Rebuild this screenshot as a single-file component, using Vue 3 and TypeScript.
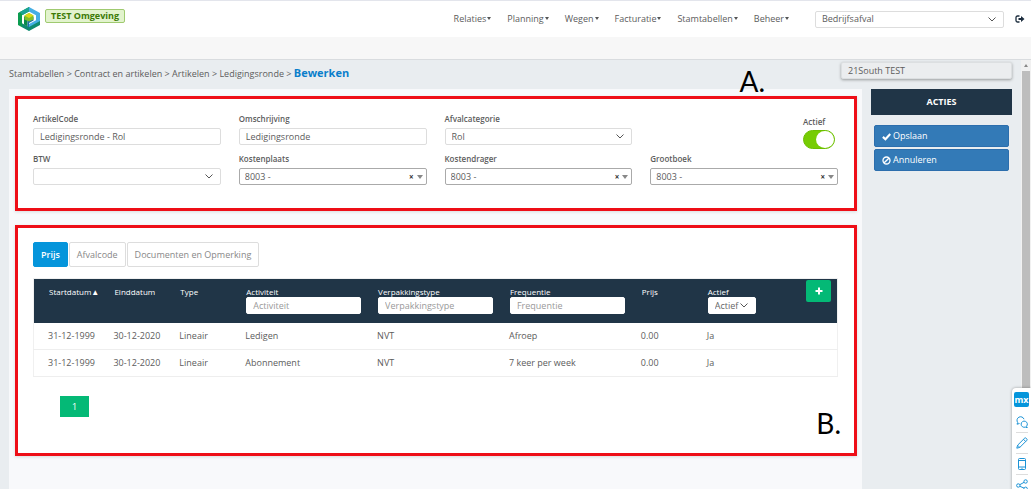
<script setup lang="ts">
import { ref } from 'vue'

interface PriceRow {
  start: string
  end: string
  type: string
  activity: string
  packaging: string
  frequency: string
  price: string
  active: string
}

const menu = ['Relaties', 'Planning', 'Wegen', 'Facturatie', 'Stamtabellen', 'Beheer']
const crumbs = ['Stamtabellen', 'Contract en artikelen', 'Artikelen', 'Ledigingsronde']
const tabs = ['Prijs', 'Afvalcode', 'Documenten en Opmerking']
const accounts = [
  { id: 'kostenplaats', label: 'Kostenplaats' },
  { id: 'kostendrager', label: 'Kostendrager' },
  { id: 'grootboek', label: 'Grootboek' },
]
const filters = [
  { id: 'f-activiteit', label: 'Activiteit' },
  { id: 'f-verpakking', label: 'Verpakkingstype' },
  { id: 'f-frequentie', label: 'Frequentie' },
]
const rows: PriceRow[] = [
  { start: '31-12-1999', end: '30-12-2020', type: 'Lineair', activity: 'Ledigen', packaging: 'NVT', frequency: 'Afroep', price: '0.00', active: 'Ja' },
  { start: '31-12-1999', end: '30-12-2020', type: 'Lineair', activity: 'Abonnement', packaging: 'NVT', frequency: '7 keer per week', price: '0.00', active: 'Ja' },
]

const activeTab = ref('Prijs')
const code = ref('Ledigingsronde - Rol')
const description = ref('Ledigingsronde')
const enabled = ref(true)
</script>

<template>
  <div class="app">
    <header class="topbar">
      <svg class="logo" viewBox="0 0 24 24" aria-hidden="true">
        <path d="M12 0 1 6v12l4 2.200V8.200L12 4.500z" fill="#0c9c50" />
        <path d="M12 0 3 5l2.500 3L12 4.500l3-1.600z" fill="#1aa394" />
        <path d="M12 0v4.500l7 3.700v5L12 17v4l11-6V6z" fill="#45aee4" />
        <path d="M12 24 5 20.200v-4l7 3.800 11-6v4z" fill="#0e8a70" />
        <path d="M7 9v8.500l3.500 2V13z" fill="#0a8a48" />
        <path d="M10.500 13l6-3v3.500L12 16v4.500l-1.500-.9z" fill="#1b6fa6" />
        <path d="M12 6 7.500 8.500v4L12 14.500l4.500-2v-4z" fill="#7fbf2a" />
        <path d="M12 6 7.500 8.500 12 11l4.500-2.500z" fill="#d9d916" />
      </svg>
      <span class="env">TEST Omgeving</span>
      <nav class="menu">
        <button v-for="item in menu" :key="item" type="button">{{ item }}<i class="caret"></i></button>
      </nav>
      <div class="picker company">
        <select aria-label="Afdeling"><option>Bedrijfsafval</option></select>
        <svg class="chevron" viewBox="0 0 8 5" aria-hidden="true"><path d="M.5.5 4 4 7.500.5" /></svg>
      </div>
      <button class="logout" type="button" aria-label="Uitloggen">
        <svg viewBox="0 0 20 16" aria-hidden="true">
          <path d="M9 2H5a3 3 0 0 0-3 3v6a3 3 0 0 0 3 3h4" fill="none" stroke="#1b2c3d" stroke-width="2.600" />
          <path d="M7 5.800h5V2l7 6-7 6v-3.800H7z" fill="#1b2c3d" />
        </svg>
      </button>
    </header>
    <div class="subbar"></div>

    <div class="body">
      <div class="content">
        <div class="crumb-row">
          <nav class="crumbs">
            <template v-for="c in crumbs" :key="c"><a href="#">{{ c }}</a> &gt; </template><strong>Bewerken</strong>
          </nav>
          <div class="notice">21South TEST</div>
        </div>

        <div class="columns">
          <main class="panel">
            <section class="card details">
              <span class="mark mark-a">A.</span>
              <div class="field">
                <label for="code">ArtikelCode</label>
                <input id="code" v-model="code" type="text" />
              </div>
              <div class="field">
                <label for="description">Omschrijving</label>
                <input id="description" v-model="description" type="text" />
              </div>
              <div class="field">
                <label for="category">Afvalcategorie</label>
                <div class="picker">
                  <select id="category"><option>Rol</option></select>
                  <svg class="chevron" viewBox="0 0 8 5" aria-hidden="true"><path d="M.5.5 4 4 7.500.5" /></svg>
                </div>
              </div>
              <label class="toggle">
                <span>Actief</span>
                <input v-model="enabled" type="checkbox" />
              </label>
              <div class="field">
                <label for="btw">BTW</label>
                <div class="picker">
                  <select id="btw"><option></option></select>
                  <svg class="chevron" viewBox="0 0 8 5" aria-hidden="true"><path d="M.5.5 4 4 7.500.5" /></svg>
                </div>
              </div>
              <div v-for="a in accounts" :key="a.id" class="field">
                <label :for="a.id">{{ a.label }}</label>
                <div class="picker account">
                  <select :id="a.id"><option>8003 -</option></select>
                  <span class="tools">
                    <button type="button" :aria-label="a.label + ' wissen'">×</button>
                    <i class="caret"></i>
                  </span>
                </div>
              </div>
            </section>

            <section class="card prices">
              <span class="mark mark-b">B.</span>
              <div class="tabs">
                <button
                  v-for="t in tabs"
                  :key="t"
                  type="button"
                  :class="{ active: t === activeTab }"
                  @click="activeTab = t"
                >{{ t }}</button>
              </div>
              <table>
                <colgroup>
                  <col class="narrow" /><col class="narrow" /><col class="narrow" />
                  <col class="wide" /><col class="wide" /><col class="wide" />
                  <col class="narrow" /><col />
                </colgroup>
                <thead>
                  <tr>
                    <th>Startdatum<span class="sort">▲</span></th>
                    <th>Einddatum</th>
                    <th>Type</th>
                    <th v-for="f in filters" :key="f.id">
                      <label :for="f.id">{{ f.label }}</label>
                      <input :id="f.id" type="text" :placeholder="f.label" />
                    </th>
                    <th>Prijs</th>
                    <th>
                      <div class="last">
                        <div>
                          <label for="f-actief">Actief</label>
                          <div class="picker state">
                            <select id="f-actief"><option>Actief</option></select>
                            <svg class="chevron" viewBox="0 0 8 5" aria-hidden="true"><path d="M.5.5 4 4 7.500.5" /></svg>
                          </div>
                        </div>
                        <button class="add" type="button" aria-label="Toevoegen">
                          <svg viewBox="0 0 8 8" aria-hidden="true"><path d="M3 .5h2V3h2.500v2H5v2.500H3V5H.5V3H3z" fill="#fff" /></svg>
                        </button>
                      </div>
                    </th>
                  </tr>
                </thead>
                <tbody>
                  <tr v-for="r in rows" :key="r.activity">
                    <td>{{ r.start }}</td>
                    <td>{{ r.end }}</td>
                    <td>{{ r.type }}</td>
                    <td>{{ r.activity }}</td>
                    <td>{{ r.packaging }}</td>
                    <td>{{ r.frequency }}</td>
                    <td>{{ r.price }}</td>
                    <td>{{ r.active }}</td>
                  </tr>
                </tbody>
              </table>
              <button class="page" type="button">1</button>
            </section>
          </main>

          <aside class="actions">
            <h2>ACTIES</h2>
            <button type="button">
              <svg viewBox="0 0 10 10" aria-hidden="true"><path d="M1 5.400 3.800 8 9.200 2.200" fill="none" stroke="#fff" stroke-width="2.400" /></svg>
              Opslaan
            </button>
            <button type="button">
              <svg viewBox="0 0 10 10" aria-hidden="true"><circle cx="5" cy="5" r="3.900" fill="none" stroke="#fff" stroke-width="1.500" /><path d="M2.400 7.600l5.200-5.200" stroke="#fff" stroke-width="1.500" /></svg>
              Annuleren
            </button>
          </aside>
        </div>
      </div>
      <div class="scrollbar"><i class="up"></i><i class="thumb"></i></div>
    </div>

    <div class="toolbox">
      <span class="mx">mx</span>
      <button type="button" aria-label="Feedback">
        <svg viewBox="0 0 12 12"><path d="M3.500 7.500 1 8.200l.7-1.700A3.600 3.600 0 1 1 8 3.200" /><path d="M10.500 10.300l.8 1.400-2-.6a3.100 3.100 0 1 1 1.200-.8z" /></svg>
      </button>
      <button type="button" aria-label="Bewerken">
        <svg viewBox="0 0 12 12"><path d="M.8 11.200l.8-3L8.800 1c.8-.8 3 1.400 2.200 2.200L3.800 10.400zM7.500 2.300l2.200 2.200M1.600 8.200l2.200 2.200" /></svg>
      </button>
      <button type="button" aria-label="Mobiel">
        <svg viewBox="0 0 12 12"><rect x="2.500" y=".5" width="7" height="11" rx="1" /><path d="M2.500 2.500h7M2.500 9h7M5.500 10.300h1" /></svg>
      </button>
      <button type="button" aria-label="Delen">
        <svg viewBox="0 0 12 12"><circle cx="2.300" cy="6.500" r="1.700" /><circle cx="9.600" cy="2.500" r="1.700" /><circle cx="9.600" cy="9.800" r="1.700" /><path d="M3.800 5.700l4.300-2.400M3.800 7.300l4.300 1.800" /></svg>
      </button>
    </div>
  </div>
</template>

<style>
body {
  margin: 0;
}
</style>

<style scoped>
.app {
  position: relative;
  display: flex;
  flex-direction: column;
  height: 100vh;
  overflow: hidden;
  box-sizing: border-box;
  border-top: 1px solid #e3e5ec;
  background: #e9edf0;
  color: #5c5c5c;
  font: 9px/12px "Open Sans", "Noto Sans", sans-serif;
}
.app *,
.app *::before {
  box-sizing: border-box;
}
button,
input,
select {
  margin: 0;
  font: inherit;
  color: inherit;
}
button {
  padding: 0;
  border: 0;
  background: none;
  cursor: pointer;
}
.topbar {
  display: flex;
  align-items: center;
  height: 36px;
  flex: none;
  padding: 0 6px 0 17px;
  background: #fff;
}
.logo {
  width: 24px;
  height: 24px;
}
.env {
  align-self: flex-start;
  margin: 8px auto 0 4px;
  padding: 0 5px;
  border: 1px solid #9fca70;
  border-radius: 2px;
  background: #e2f3cd;
  color: #3c7a06;
  font-weight: 700;
  line-height: 12px;
}
.menu {
  display: flex;
  gap: 16px;
  margin-right: 26px;
}
.caret {
  display: inline-block;
  margin-left: 1px;
  border: 2px solid transparent;
  border-top: 3px solid #555;
  border-bottom: 0;
  vertical-align: 2px;
}
.picker {
  display: grid;
  grid-template-columns: 1fr auto;
  align-items: center;
}
.picker > select {
  grid-area: 1 / 1 / 2 / 3;
}
.picker > .chevron,
.picker > .tools {
  grid-area: 1 / 2;
  margin-right: 8px;
  pointer-events: none;
}
.chevron {
  width: 8px;
  height: 5px;
  fill: none;
  stroke: #555;
}
input[type="text"],
select {
  width: 100%;
  height: 17px;
  padding: 0 6px;
  border: 1px solid #ddd;
  border-radius: 2px;
  background: #fff;
  appearance: none;
  outline: 0;
}
.company {
  width: 189px;
  margin-right: 11px;
}
.logout {
  display: flex;
}
.logout svg {
  width: 10px;
  height: 8px;
}
.subbar {
  height: 23px;
  flex: none;
  border-bottom: 1px solid #d9dcdf;
  background: #f7f7f7;
}
.body {
  flex: 1;
  display: flex;
  min-height: 0;
}
.content {
  flex: 1;
  display: flex;
  flex-direction: column;
  padding: 0 9px;
}
.crumb-row {
  display: flex;
  justify-content: space-between;
  height: 29px;
  flex: none;
}
.crumbs {
  padding-top: 5px;
  line-height: 16px;
}
.crumbs a {
  color: inherit;
  text-decoration: none;
}
.crumbs strong {
  color: #0a7ecb;
  font-size: 11px;
}
.notice {
  width: 171px;
  height: 17px;
  margin-top: 2px;
  padding: 0 6px;
  border: 1px solid #dcdfe1;
  border-radius: 2px;
  box-shadow: 0 1px 3px rgba(0, 0, 0, 0.35);
  background: #ebedef;
  line-height: 15px;
}
.columns {
  flex: 1;
  display: flex;
  gap: 9px;
}
.panel {
  flex: 1;
  display: flex;
  flex-direction: column;
  gap: 14px;
  padding: 7px 5px 0 6px;
  background: #f8f9fb;
}
.card {
  position: relative;
  border: 3px solid #ee0e17;
  background: #fff;
  box-shadow: 0 1px 3px rgba(0, 0, 0, 0.12);
}
.details {
  display: grid;
  grid-template-columns: repeat(4, 1fr);
  gap: 4px 18px;
  padding: 14px 16px 23px 15px;
}
.field label {
  display: block;
  height: 15px;
  font-size: 8px;
  font-weight: 600;
}
.toggle {
  justify-self: end;
  display: flex;
  flex-direction: column;
  width: 35px;
  padding-top: 3px;
  font-size: 8px;
  font-weight: 600;
}
.toggle input {
  display: flex;
  justify-content: flex-end;
  width: 32px;
  height: 19px;
  margin: 2px 0 0;
  border: 1px solid #6cbf00;
  border-radius: 10px;
  background: #fff;
  appearance: none;
}
.toggle input::before {
  content: "";
  width: 18px;
  height: 17px;
  border-radius: 50%;
  background: #fff;
}
.toggle input:checked {
  background: #77cc03;
}
.account select {
  padding: 0 5px;
  border-color: #aaa;
}
.picker > .tools {
  display: flex;
  align-items: center;
  gap: 2px;
  margin-right: 4px;
}
.tools button {
  color: #333;
  font-size: 8px;
  font-weight: 700;
  line-height: 10px;
}
.tools .caret {
  border-width: 4px 3px 0;
  border-top-color: #888;
}
.prices {
  height: 231px;
  padding: 14px 16px 0 15px;
}
.tabs {
  display: flex;
  gap: 1px;
  margin-bottom: 11px;
}
.tabs button {
  height: 25px;
  padding: 0 7px;
  border: 1px solid #ddd;
  border-radius: 2px;
  background: #fff;
  color: #888;
}
.tabs .active {
  border-color: #0595db;
  background: #0595db;
  color: #fff;
  font-weight: 600;
}
table {
  width: 100%;
  table-layout: fixed;
  border-collapse: collapse;
  border: 1px solid #f0f0f0;
}
.narrow {
  width: 8.2%;
}
.wide {
  width: 16.4%;
}
thead {
  background: #203547;
  color: #fff;
}
th {
  height: 44px;
  padding: 7px 2px 0 15px;
  font-size: 8px;
  font-weight: 400;
  text-align: left;
  vertical-align: top;
  line-height: 11px;
  white-space: nowrap;
}
th label {
  display: block;
}
th input[type="text"],
th select {
  display: block;
  border-color: #fff;
  color: #666;
  font-size: 9px;
}
th input::placeholder {
  color: #999;
  opacity: 1;
}
.last {
  display: flex;
  justify-content: space-between;
  margin-top: -6px;
  padding-right: 4px;
}
.last > div {
  padding-top: 6px;
}
.state {
  width: 48px;
}
.add {
  display: flex;
  align-items: center;
  justify-content: center;
  width: 25px;
  height: 22px;
  border-radius: 2px;
  background: #04b976;
}
.add svg {
  width: 8px;
  height: 8px;
}
td {
  height: 27px;
  padding: 0 0 0 14px;
  border-bottom: 1px solid #eee;
}
.page {
  width: 29px;
  height: 21px;
  margin: 19px 0 0 27px;
  background: #04b976;
  color: #fff;
}
.actions {
  width: 141px;
  display: flex;
  flex-direction: column;
}
.actions h2 {
  margin: 0 0 10px;
  background: #203547;
  color: #fff;
  font-size: 9px;
  font-weight: 700;
  line-height: 26px;
  text-align: center;
}
.actions button {
  display: flex;
  align-items: center;
  gap: 2px;
  height: 22px;
  margin: 0 3px 2px;
  padding: 0 7px;
  border: 1px solid #2c6ead;
  border-radius: 2px;
  background: #337ab7;
  color: #fff;
}
.actions svg {
  width: 9px;
  height: 9px;
}
.scrollbar {
  width: 10px;
  display: flex;
  flex-direction: column;
  align-items: center;
  gap: 4px;
  padding-top: 4px;
  background: #f1f1f1;
}
.up {
  border: 2px solid transparent;
  border-top: 0;
  border-bottom: 3px solid #888;
}
.thumb {
  width: 8px;
  flex: 1;
  background: #bdbdbd;
}
.toolbox {
  position: absolute;
  top: 387px;
  right: 0;
  display: flex;
  flex-direction: column;
  align-items: center;
  width: 19px;
  padding: 4px 2px 0;
  border-radius: 4px 0 0 0;
  background: #fff;
  box-shadow: 0 0 3px rgba(0, 0, 0, 0.35);
}
.mx {
  width: 15px;
  margin-bottom: 4px;
  border-radius: 2px;
  background: #0595db;
  color: #fff;
  font-size: 9px;
  font-weight: 700;
  line-height: 15px;
  text-align: center;
}
.toolbox button {
  display: flex;
  align-items: center;
  justify-content: center;
  width: 12px;
  height: 21px;
}
.toolbox button + button {
  border-top: 1px solid #ddd;
}
.toolbox svg {
  width: 12px;
  height: 12px;
  fill: none;
  stroke: #1c93d6;
}
.mark {
  position: absolute;
  color: #000;
  font: 28px/28px Lato, sans-serif;
}
.mark-a {
  top: -32px;
  right: 89px;
}
.mark-b {
  right: 13px;
  bottom: 16px;
}
</style>
